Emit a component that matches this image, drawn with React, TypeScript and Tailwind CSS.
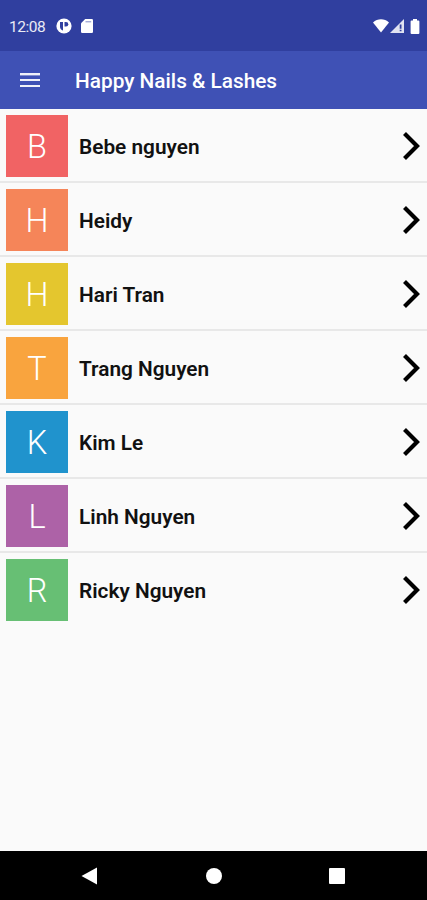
import { useState } from "react";

const clients = [
  { name: "Bebe nguyen", color: "bg-[#f16364]" },
  { name: "Heidy", color: "bg-[#f58559]" },
  { name: "Hari Tran", color: "bg-[#e4c62e]" },
  { name: "Trang Nguyen", color: "bg-[#f9a43e]" },
  { name: "Kim Le", color: "bg-[#2093cd]" },
  { name: "Linh Nguyen", color: "bg-[#ad62a7]" },
  { name: "Ricky Nguyen", color: "bg-[#67bf74]" },
];

function StatusBar() {
  return (
    <div className="h-[51px] bg-[#303f9f] flex items-center justify-between pl-[9px] pr-[7px] pt-px text-white">
      <div className="flex items-center">
        <span className="w-[47px] pt-px text-[15.5px] leading-5 tracking-[-0.5px] text-white/90">12:08</span>
        <svg width="16" height="16" viewBox="0 0 16 16">
          <circle cx="8" cy="8" r="7.6" fill="#fff" />
          <path d="M4 4H7V12.5C5 12 4 10.5 4 8.5z" fill="#303f9f" />
          <path d="M8.5 4H10a2.3 2.3 0 0 1 0 4.6H8.5z" fill="#303f9f" />
        </svg>
        <svg width="12" height="14" viewBox="0 0 12 14" className="ml-[9px]">
          <path d="M4.2 0H10.8A1.2 1.2 0 0 1 12 1.2V12.8A1.2 1.2 0 0 1 10.8 14H1.2A1.2 1.2 0 0 1 0 12.8V4.2z" fill="#fff" />
          <path d="M4.5 2.8H10.2" stroke="#303f9f" strokeWidth="1" opacity=".6" />
        </svg>
      </div>
      <div className="flex items-center">
        <svg width="16" height="14" viewBox="0 0 16 14">
          <path d="M0 3.6C4.5 -0.8 11.5 -0.8 16 3.6L8 13.5z" fill="#fff" />
        </svg>
        <svg width="14" height="14" viewBox="0 0 14 14" className="ml-[1.5px]">
          <path d="M0 14L14 0V14z" fill="#fff" opacity=".85" />
          <path d="M10.6 5.5v4.3M10.6 10.8v1.4" stroke="#303f9f" strokeWidth="1.8" />
        </svg>
        <svg width="10" height="15" viewBox="0 0 10 15" className="ml-[6px]">
          <path d="M3 0h4v1.6h1.4q1 0 1 1V14q0 1-1 1H1.6q-1 0-1-1V2.6q0-1 1-1H3z" fill="#fff" />
        </svg>
      </div>
    </div>
  );
}

export default function App() {
  const [selected, setSelected] = useState("");

  return (
    <div className="w-full h-[900px] flex flex-col bg-[#fafafa] font-[Roboto,sans-serif] overflow-hidden">
      <StatusBar />

      {/* TOOLBAR */}
      <header className="h-[58px] bg-[#3f51b5] flex items-center pl-5">
        <button aria-label="Menu" className="w-[55px]">
          <svg width="20" height="14" viewBox="0 0 20 14" stroke="#fff" opacity=".92">
            <path d="M0 1.2H20" strokeWidth="2.4" />
            <path d="M0 7H20M0 13H20" strokeWidth="2" />
          </svg>
        </button>
        <h1 className="text-[20.8px] font-medium text-white leading-6 pt-0.5">Happy Nails &amp; Lashes</h1>
      </header>

      {/* CLIENT LIST */}
      <ul className="flex-1">
        {clients.map((c, i) => (
          <li
            key={c.name}
            onClick={() => setSelected(c.name)}
            aria-current={selected === c.name}
            className={`h-[74px] flex pt-1.5 pl-1.5 pr-[7px] ${i < clients.length - 1 ? "border-b-2 border-[#e8e8e8]" : ""}`}
          >
            <div className={`size-[62px] flex items-center justify-center pt-px text-[32.5px] leading-10 font-light text-white ${c.color}`}>
              {c.name[0]}
            </div>
            <span className="flex-1 h-[62px] flex items-center pl-[11px] pt-px text-[20.8px] leading-6 font-semibold text-[#111]">{c.name}</span>
            <svg width="18" height="30" viewBox="0 0 18 30" fill="none" stroke="#000" strokeWidth="4.2" className="mt-4">
              <path d="M2.5 2.5L15 15L2.5 27.5" />
            </svg>
          </li>
        ))}
      </ul>

      {/* SYSTEM NAVIGATION */}
      <nav className="h-[49px] bg-black flex items-center justify-between pl-[81px] pr-[82px]">
        <svg width="17" height="18" viewBox="0 0 17 18">
          <path d="M0.5 9L16 0.5V17.5z" fill="#fff" />
        </svg>
        <span className="size-4 rounded-full bg-white" />
        <span className="size-4 rounded-[1px] bg-white" />
      </nav>
    </div>
  );
}
